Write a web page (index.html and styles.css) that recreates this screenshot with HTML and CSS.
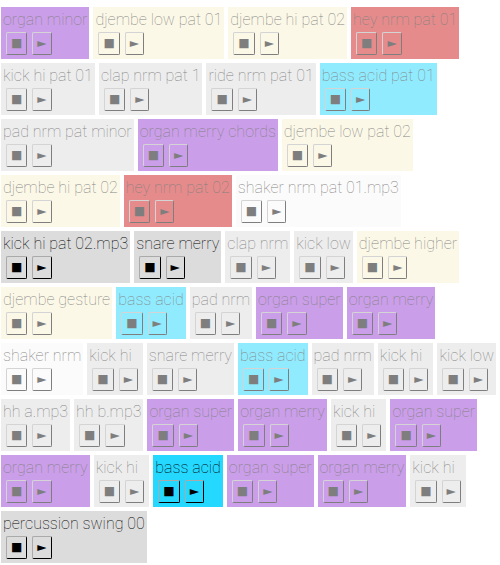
FILE: index.html
```
<!DOCTYPE html>
<html lang="en">
<head>
<meta charset="utf-8">
<title>Sound board</title>
<link rel="stylesheet" href="styles.css">
</head>
<body>
<main class="board" id="board"></main>
<script src="board.js"></script>
</body>
</html>
```
FILE: board.js
```
const clips = [
  ["organ minor", "organ"],
  ["djembe low pat 01", "djembe"],
  ["djembe hi pat 02", "djembe"],
  ["hey nrm pat 01", "hey"],
  ["kick hi pat 01", "drum"],
  ["clap nrm pat 1", "drum"],
  ["ride nrm pat 01", "drum"],
  ["bass acid pat 01", "bass"],
  ["pad nrm pat minor", "drum"],
  ["organ merry chords", "organ"],
  ["djembe low pat 02", "djembe"],
  ["djembe hi pat 02", "djembe"],
  ["hey nrm pat 02", "hey"],
  ["shaker nrm pat 01.mp3", "shaker"],
  ["kick hi pat 02.mp3", "drum", true],
  ["snare merry", "drum", true],
  ["clap nrm", "drum"],
  ["kick low", "drum"],
  ["djembe higher", "djembe"],
  ["djembe gesture", "djembe"],
  ["bass acid", "bass"],
  ["pad nrm", "drum"],
  ["organ super", "organ"],
  ["organ merry", "organ"],
  ["shaker nrm", "shaker"],
  ["kick hi", "drum"],
  ["snare merry", "drum"],
  ["bass acid", "bass"],
  ["pad nrm", "drum"],
  ["kick hi", "drum"],
  ["kick low", "drum"],
  ["hh a.mp3", "drum"],
  ["hh b.mp3", "drum"],
  ["organ super", "organ"],
  ["organ merry", "organ"],
  ["kick hi", "drum"],
  ["organ super", "organ"],
  ["organ merry", "organ"],
  ["kick hi", "drum"],
  ["bass acid", "bass", true],
  ["organ super", "organ"],
  ["organ merry", "organ"],
  ["kick hi", "drum"],
  ["percussion swing 00", "drum", true]
];

const board = document.getElementById("board");

function makeButton(glyph, label) {
  const button = document.createElement("button");
  button.type = "button";
  button.className = "control";
  button.textContent = glyph;
  button.setAttribute("aria-label", label);
  return button;
}

for (const [name, kind, active] of clips) {
  const clip = document.createElement("section");
  clip.className = "clip " + kind + (active ? " active" : "");
  const title = document.createElement("div");
  title.className = "name";
  title.textContent = name;
  const controls = document.createElement("div");
  controls.className = "controls";
  controls.append(makeButton("■", "Stop " + name), makeButton("►", "Play " + name));
  clip.append(title, controls);
  board.append(clip);
}
```
FILE: styles.css
```
body {
  margin: 0;
  background: #fff;
  color: #000;
  font-family: Roboto, sans-serif;
  font-size: 16px;
  font-weight: 100;
}

.board {
  display: flex;
  flex-wrap: wrap;
  gap: 4px;
  padding: 7px 1px 2px;
}

.clip {
  height: 52px;
  opacity: 0.5;
}

.clip.active {
  opacity: 1;
}

.name {
  padding: 3px 2px 0;
  line-height: 19px;
  white-space: nowrap;
}

.controls {
  display: flex;
  gap: 5px;
  padding: 3px 5px 0;
}

.control {
  box-sizing: border-box;
  height: 23px;
  padding: 0 4px;
  border: 1px solid #000;
  border-top-color: #aaa;
  border-left-color: #aaa;
  border-radius: 2px;
  background: transparent;
  color: #000;
  font: 12px/19px "DejaVu Sans", sans-serif;
}

.organ {
  background: #983fd4;
}

.djembe {
  background: #f9f2d1;
}

.hey {
  background: #cc1a1a;
}

.drum {
  background: #dcdcdc;
}

.bass {
  background: #25d8ff;
}

.shaker {
  background: #f8f8f8;
}
```
